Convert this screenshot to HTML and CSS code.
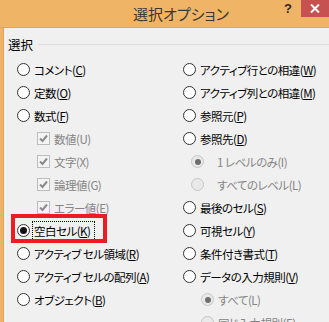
FILE: index.html
```html
<!DOCTYPE html>
<html>
<head>
<meta charset="UTF-8">
<title>選択オプション</title>
<link rel="stylesheet" href="styles.css">
</head>
<body>
<div class="window">
    <div class="titlebar">
        <span class="title">選択オプション</span>
        <span class="help">?</span>
        <span class="close"><svg width="10" height="9" viewBox="0 0 10 9"><path d="M1 0.5 L9 8.5 M9 0.5 L1 8.5" stroke="#fff" stroke-width="2"/></svg></span>
    </div>
    <div class="client">
        <div class="legend">選択</div>
        <div class="cols">
            <div class="col">
                <div class="opt"><span class="radio"></span><span class="lbl">コメント(<u>C</u>)</span></div>
                <div class="opt"><span class="radio"></span><span class="lbl">定数(<u>O</u>)</span></div>
                <div class="opt"><span class="radio"></span><span class="lbl">数式(<u>F</u>)</span></div>
                <div class="opt sub off"><span class="check"><svg width="11" height="11" viewBox="0 0 11 11"><path d="M2 5.5 L4.5 8 L9 2.5" fill="none" stroke="#8a8a8a" stroke-width="2"/></svg></span><span class="lbl">数値(U)</span></div>
                <div class="opt sub off"><span class="check"><svg width="11" height="11" viewBox="0 0 11 11"><path d="M2 5.5 L4.5 8 L9 2.5" fill="none" stroke="#8a8a8a" stroke-width="2"/></svg></span><span class="lbl">文字(X)</span></div>
                <div class="opt sub off"><span class="check"><svg width="11" height="11" viewBox="0 0 11 11"><path d="M2 5.5 L4.5 8 L9 2.5" fill="none" stroke="#8a8a8a" stroke-width="2"/></svg></span><span class="lbl">論理値(G)</span></div>
                <div class="opt sub off"><span class="check"><svg width="11" height="11" viewBox="0 0 11 11"><path d="M2 5.5 L4.5 8 L9 2.5" fill="none" stroke="#8a8a8a" stroke-width="2"/></svg></span><span class="lbl">エラー値(E)</span></div>
                <div class="opt marked"><span class="radio on"></span><span class="lbl focus">空白セル(<u>K</u>)</span></div>
                <div class="opt"><span class="radio"></span><span class="lbl">アクティブ セル領域(<u>R</u>)</span></div>
                <div class="opt"><span class="radio"></span><span class="lbl">アクティブ セルの配列(<u>A</u>)</span></div>
                <div class="opt"><span class="radio"></span><span class="lbl">オブジェクト(<u>B</u>)</span></div>
            </div>
            <div class="col">
                <div class="opt"><span class="radio"></span><span class="lbl">アクティブ行との相違(<u>W</u>)</span></div>
                <div class="opt"><span class="radio"></span><span class="lbl">アクティブ列との相違(<u>M</u>)</span></div>
                <div class="opt"><span class="radio"></span><span class="lbl">参照元(<u>P</u>)</span></div>
                <div class="opt"><span class="radio"></span><span class="lbl">参照先(<u>D</u>)</span></div>
                <div class="opt level off"><span class="radio on"></span><span class="lbl">1 レベルのみ(I)</span></div>
                <div class="opt level off"><span class="radio"></span><span class="lbl">すべてのレベル(L)</span></div>
                <div class="opt"><span class="radio"></span><span class="lbl">最後のセル(<u>S</u>)</span></div>
                <div class="opt"><span class="radio"></span><span class="lbl">可視セル(<u>Y</u>)</span></div>
                <div class="opt"><span class="radio"></span><span class="lbl">条件付き書式(<u>T</u>)</span></div>
                <div class="opt"><span class="radio"></span><span class="lbl">データの入力規則(<u>V</u>)</span></div>
                <div class="opt valid off"><span class="radio on"></span><span class="lbl">すべて(L)</span></div>
                <div class="opt valid off"><span class="radio"></span><span class="lbl">同じ入力規則(E)</span></div>
            </div>
        </div>
    </div>
</div>
</body>
</html>
```

FILE: styles.css
```css
html, body {
    margin: 0;
    padding: 0;
}
body {
    width: 329px;
    height: 322px;
    overflow: hidden;
    background-color: #f0b466;
    font-family: "Noto Sans CJK JP", "Liberation Sans", sans-serif;
    font-feature-settings: "palt";
    font-size: 12px;
    color: #000;
}
.window {
    height: 322px;
    display: flex;
    flex-direction: column;
}
.titlebar {
    height: 27px;
    flex: none;
    display: flex;
    align-items: flex-start;
    border-bottom: 1px solid #dca45e;
}
.title {
    flex: 1;
    padding-left: 133px;
    font-size: 15px;
    line-height: 27px;
    color: #383838;
}
.help {
    width: 17px;
    font-family: "Liberation Sans", sans-serif;
    font-weight: bold;
    font-size: 13px;
    line-height: 17px;
    color: #2b2b2b;
}
.close {
    width: 28px;
    height: 17px;
    background-color: #c75050;
    display: flex;
    align-items: center;
    justify-content: center;
}
.close svg {
    display: block;
}
.client {
    flex: 1;
    margin-left: 3px;
    border-left: 1px solid #dca45e;
    background-color: #f0f0f0;
    position: relative;
}
.legend {
    display: flex;
    align-items: center;
    height: 18px;
    margin: 7px 0 5px 4px;
    font-size: 12.5px;
}
.legend:after {
    content: "";
    flex: 1;
    height: 1px;
    margin-left: 5px;
    background-color: #dcdcdc;
}
.cols {
    display: grid;
    grid-template-columns: 166px 1fr;
    margin-left: 13px;
}
.opt {
    height: 23px;
    display: flex;
    align-items: center;
    white-space: nowrap;
}
.lbl {
    margin-left: 4px;
    font-size: 11.5px;
    line-height: 18px;
    letter-spacing: -0.5px;
}
.lbl u {
    text-underline-offset: 1px;
}
.radio {
    width: 11px;
    height: 11px;
    flex: none;
    border: 1px solid #333;
    border-radius: 50%;
    background-color: #fff;
    display: flex;
    align-items: center;
    justify-content: center;
}
.radio.on:after {
    content: "";
    width: 7px;
    height: 7px;
    border-radius: 50%;
    background-color: #111;
}
.check {
    width: 11px;
    height: 11px;
    flex: none;
    border: 1px solid #bcbcbc;
    background-color: #f4f4f4;
}
.check svg {
    display: block;
}
.off {
    color: #858585;
}
.off .radio {
    border-color: #c6c6c6;
    background-color: #e9e9e9;
}
.off .radio.on:after {
    width: 6px;
    height: 6px;
    background-color: #6e6e6e;
}
.sub {
    margin-left: 20px;
}
.level {
    margin-left: 8px;
}
.level .lbl {
    margin-left: 13px;
}
.valid {
    margin-left: 18px;
}
.focus {
    margin-left: 2px;
    padding: 0 4px 0 1px;
    border: 1px dotted #000;
}
.marked {
    position: relative;
}
.marked:before {
    content: "";
    position: absolute;
    left: -6px;
    top: -5px;
    width: 88px;
    height: 21px;
    border: 4px solid #ec1c24;
}
```
